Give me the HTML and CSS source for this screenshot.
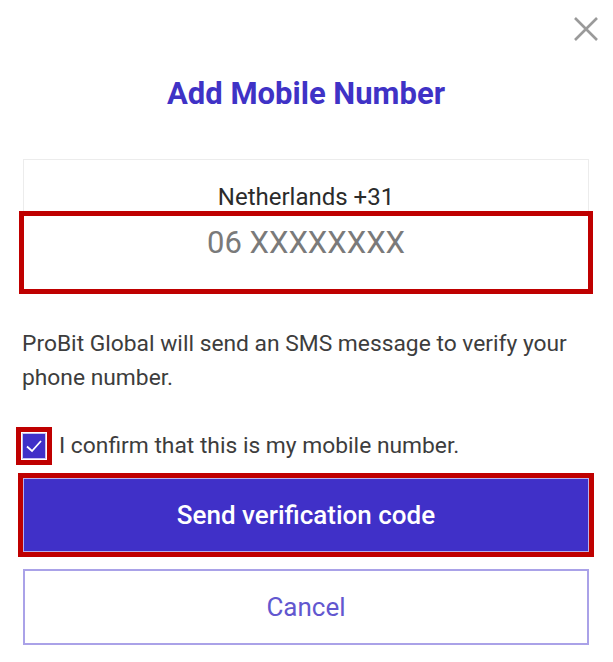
FILE: index.html
```html
<!DOCTYPE html>
<html lang="en">
<head>
<meta charset="utf-8">
<title>Add Mobile Number</title>
<link rel="stylesheet" href="styles.css">
</head>
<body>
<div class="modal">
  <div class="modal-top">
    <button class="close" aria-label="Close">
      <svg width="26" height="26" viewBox="0 0 26 26"><path d="M2 2 L24 24 M24 2 L2 24" stroke="#9a9a9a" stroke-width="2.6" fill="none"/></svg>
    </button>
  </div>
  <h1 class="title">Add Mobile Number</h1>

  <div class="phone">
    <div class="country">Netherlands +31</div>
    <div class="number marked">06 XXXXXXXX</div>
  </div>

  <p class="note">ProBit Global will send an SMS message to verify your phone number.</p>

  <label class="confirm">
    <span class="check marked-sm">
      <svg width="18" height="14" viewBox="0 0 18 14"><path d="M2 7.5 L7 12 L16 2" stroke="#fff" stroke-width="1.8" fill="none"/></svg>
    </span>
    <span class="confirm-text">I confirm that this is my mobile number.</span>
  </label>

  <div class="actions">
    <button class="btn primary marked">Send verification code</button>
    <button class="btn secondary">Cancel</button>
  </div>
</div>
</body>
</html>
```
FILE: styles.css
```css
html, body {
  margin: 0;
  padding: 0;
  background: #fff;
}

body {
  font-family: Roboto, "Liberation Sans", sans-serif;
  color: #333;
}

.modal {
  width: 613px;
  box-sizing: border-box;
  padding: 0 24px 0 23px;
}

.modal-top {
  display: flex;
  justify-content: flex-end;
  padding-top: 16px;
  margin-right: -10px;
}

.close {
  border: 0;
  background: none;
  padding: 0;
  width: 26px;
  height: 26px;
  cursor: pointer;
}

.title {
  margin: 34px 0 0;
  text-align: center;
  font-size: 31px;
  font-weight: 700;
  color: #3f32c6;
  line-height: 36px;
}

.phone {
  margin-top: 47px;
  border: 1px solid #ececec;
  border-bottom: 0;
}

.country {
  height: 56px;
  box-sizing: border-box;
  padding-top: 23px;
  text-align: center;
  font-size: 24px;
  line-height: 28px;
  color: #2b2b2b;
}

.number {
  height: 73px;
  box-sizing: border-box;
  padding-top: 8px;
  text-align: center;
  font-size: 31px;
  line-height: 38px;
  color: #7a7a7a;
}

/* red highlight frames */
.marked {
  outline: 5px solid #bf0000;
  outline-offset: 0;
}

.marked-sm {
  outline: 5px solid #bf0000;
  outline-offset: 1px;
}

.note {
  margin: 38px 0 0 -1px;
  font-size: 22.8px;
  line-height: 34px;
  color: #3d3d3d;
}

.confirm {
  display: flex;
  align-items: center;
  margin-top: 38px;
  margin-left: -1px;
  gap: 13px;
}

.check {
  width: 24px;
  height: 26px;
  box-sizing: border-box;
  background: #4030c8;
  border: 1px solid #c9c3f0;
  display: flex;
  align-items: center;
  justify-content: center;
  flex: none;
}

.confirm-text {
  font-size: 22.8px;
  color: #3d3d3d;
  line-height: 26px;
}

.actions {
  display: flex;
  flex-direction: column;
  margin-top: 19px;
}

.btn {
  width: 100%;
  font-family: Roboto, "Liberation Sans", sans-serif;
  font-size: 26px;
  cursor: pointer;
  box-sizing: border-box;
}

.primary {
  height: 74px;
  background: #4030c8;
  color: #fff;
  font-weight: 500;
  border: 1px solid #b8b0ec;
}

.secondary {
  height: 76px;
  margin-top: 17px;
  background: #fff;
  color: #6257cf;
  border: 2px solid #aaa2e8;
}
```
